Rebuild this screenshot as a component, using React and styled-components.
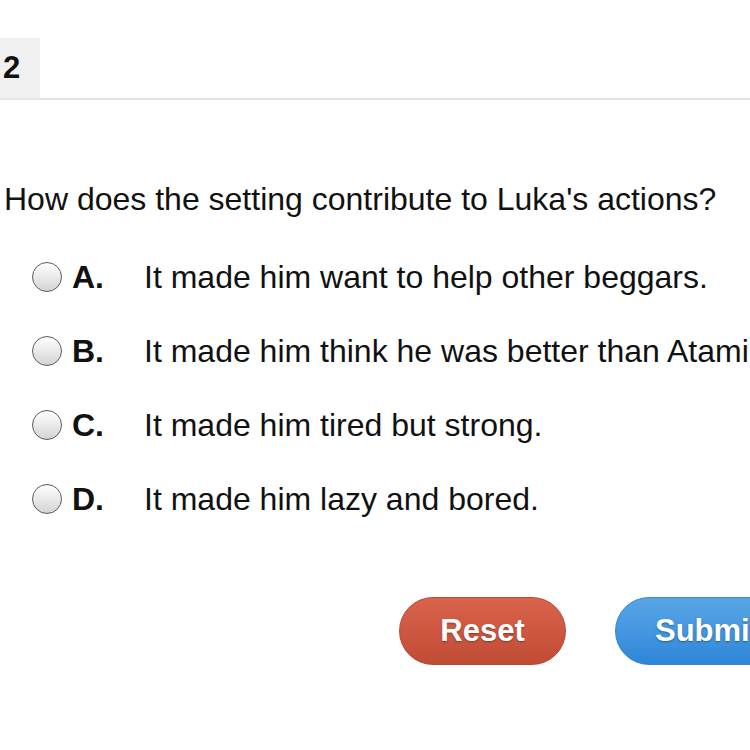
import styled, { createGlobalStyle } from "styled-components";

const GlobalStyle = createGlobalStyle`
  html, body {
    margin: 0;
    padding: 0;
    background: #ffffff;
    overflow: hidden;
  }
  body {
    font-family: "Liberation Sans", Arial, sans-serif;
    color: #111;
  }
`;

const choices = [
  { letter: "A.", text: "It made him want to help other beggars." },
  { letter: "B.", text: "It made him think he was better than Atami." },
  { letter: "C.", text: "It made him tired but strong." },
  { letter: "D.", text: "It made him lazy and bored." },
];

function App() {
  return (
    <Page>
      <GlobalStyle />
      <TabBar>
        <Tab>2</Tab>
      </TabBar>
      <Question>How does the setting contribute to Luka's actions?</Question>
      <Choices>
        {choices.map((c) => (
          <Choice key={c.letter}>
            <Radio />
            <Letter>{c.letter}</Letter>
            <ChoiceText>{c.text}</ChoiceText>
          </Choice>
        ))}
      </Choices>
      <Buttons>
        <PillButton variant="reset">Reset</PillButton>
        <PillButton variant="submit">Submit</PillButton>
      </Buttons>
    </Page>
  );
}

const Page = styled.div`
  width: 750px;
  height: 750px;
  overflow: hidden;
  padding-top: 38px;
  box-sizing: border-box;
`;

const TabBar = styled.div`
  display: flex;
  border-bottom: 2px solid #e4e4e4;
  width: 800px;
`;

const Tab = styled.div`
  width: 40px;
  height: 60px;
  background: #f0f0f0;
  font-weight: bold;
  font-size: 31px;
  display: flex;
  align-items: center;
  padding-left: 3px;
  box-sizing: border-box;
`;

const Question = styled.div`
  margin-top: 83px;
  padding-left: 4px;
  font-size: 32px;
  line-height: 32px;
  white-space: nowrap;
`;

const Choices = styled.div`
  display: flex;
  flex-direction: column;
  gap: 42px;
  margin-top: 46px;
  padding-left: 32px;
`;

const Choice = styled.div`
  display: flex;
  align-items: center;
  height: 32px;
  white-space: nowrap;
  font-size: 32px;
`;

const Radio = styled.span`
  width: 28px;
  height: 28px;
  border-radius: 50%;
  border: 1.5px solid #5a5a5a;
  background: linear-gradient(#ffffff, #d4d4d4);
  box-shadow: inset 0 1px 1px #fff;
  flex-shrink: 0;
`;

const Letter = styled.span`
  font-weight: bold;
  margin-left: 10px;
  width: 72px;
  flex-shrink: 0;
`;

const ChoiceText = styled.span`
  flex-shrink: 0;
`;

const Buttons = styled.div`
  display: flex;
  gap: 49px;
  margin-top: 82px;
  padding-left: 399px;
`;

const PillButton = styled.button`
  flex-shrink: 0;
  width: ${(p) => (p.variant === "reset" ? "167px" : "170px")};
  height: 68px;
  border-radius: 34px;
  border: 1px solid ${(p) => (p.variant === "reset" ? "#b84a34" : "#3a86d0")};
  background: ${(p) =>
    p.variant === "reset"
      ? "linear-gradient(#d9634b, #c14c36)"
      : "linear-gradient(#59a6e6, #2f86d8)"};
  color: #fff;
  font-family: "Liberation Sans", Arial, sans-serif;
  font-weight: bold;
  font-size: 31px;
  text-shadow: 0 1px 2px rgba(0, 0, 0, 0.35);
  text-align: ${(p) => (p.variant === "reset" ? "center" : "left")};
  padding: ${(p) => (p.variant === "reset" ? "0" : "0 0 0 39px")};
  white-space: nowrap;
`;

export default App;
